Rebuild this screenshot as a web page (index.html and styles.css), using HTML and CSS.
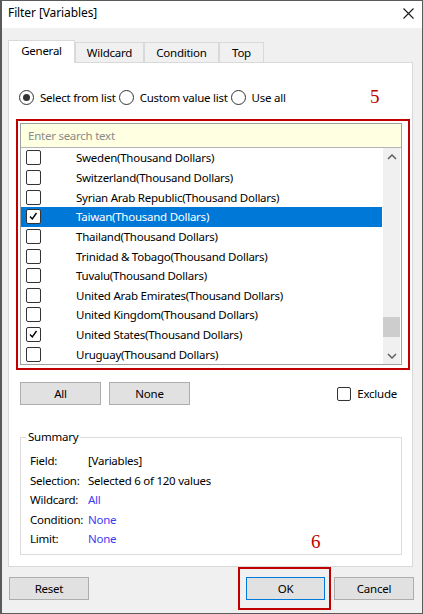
FILE: index.html
```html
<!DOCTYPE html>
<html>
<head>
<meta charset="utf-8">
<link rel="stylesheet" href="styles.css">
</head>
<body>
<div class="window">
  <div class="titlebar">
    <span class="title">Filter [Variables]</span>
    <svg class="close" width="11" height="11" viewBox="0 0 11 11"><path d="M0.5 0.5 L10.5 10.5 M10.5 0.5 L0.5 10.5" stroke="#1a1a1a" stroke-width="1.1" fill="none"/></svg>
  </div>
  <div class="content">
    <div class="tabs">
      <div class="tab active t-gen">General</div>
      <div class="tab t-wild">Wildcard</div>
      <div class="tab t-cond">Condition</div>
      <div class="tab t-top">Top</div>
    </div>
    <div class="panel">
      <div class="radios">
        <label class="radio"><span class="rb on"></span>Select from list</label>
        <label class="radio"><span class="rb"></span>Custom value list</label>
        <label class="radio"><span class="rb"></span>Use all</label>
      </div>
      <span class="anno anno5">5</span>
      <div class="redbox">
        <div class="listctl">
          <div class="search">Enter search text</div>
          <div class="listbody">
            <div class="rows">
              <div class="row"><span class="cb"></span><span>Sweden(Thousand Dollars)</span></div>
              <div class="row"><span class="cb"></span><span>Switzerland(Thousand Dollars)</span></div>
              <div class="row"><span class="cb"></span><span>Syrian Arab Republic(Thousand Dollars)</span></div>
              <div class="row sel"><span class="cb"><svg width="11" height="11" viewBox="0 0 11 11"><path d="M2 5.5 L4.3 8 L8.5 2" stroke="#000" stroke-width="1.4" fill="none"/></svg></span><span>Taiwan(Thousand Dollars)</span></div>
              <div class="row"><span class="cb"></span><span>Thailand(Thousand Dollars)</span></div>
              <div class="row"><span class="cb"></span><span>Trinidad &amp; Tobago(Thousand Dollars)</span></div>
              <div class="row"><span class="cb"></span><span>Tuvalu(Thousand Dollars)</span></div>
              <div class="row"><span class="cb"></span><span>United Arab Emirates(Thousand Dollars)</span></div>
              <div class="row"><span class="cb"></span><span>United Kingdom(Thousand Dollars)</span></div>
              <div class="row"><span class="cb"><svg width="11" height="11" viewBox="0 0 11 11"><path d="M2 5.5 L4.3 8 L8.5 2" stroke="#000" stroke-width="1.4" fill="none"/></svg></span><span>United States(Thousand Dollars)</span></div>
              <div class="row"><span class="cb"></span><span>Uruguay(Thousand Dollars)</span></div>
            </div>
            <div class="vscroll">
              <div class="sbtn"><svg width="10" height="6" viewBox="0 0 10 6"><path d="M1 5 L5 1 L9 5" stroke="#606060" stroke-width="1.5" fill="none"/></svg></div>
              <div class="track"><div class="thumb"></div></div>
              <div class="sbtn"><svg width="10" height="6" viewBox="0 0 10 6"><path d="M1 1 L5 5 L9 1" stroke="#606060" stroke-width="1.5" fill="none"/></svg></div>
            </div>
          </div>
        </div>
      </div>
      <div class="actions">
        <button class="btn">All</button>
        <button class="btn">None</button>
        <label class="exclude"><span class="cb small"></span>Exclude</label>
      </div>
      <fieldset class="summary">
        <legend>Summary</legend>
        <div class="srow"><span class="k">Field:</span><span>[Variables]</span></div>
        <div class="srow"><span class="k">Selection:</span><span>Selected 6 of 120 values</span></div>
        <div class="srow"><span class="k">Wildcard:</span><span class="blue">All</span></div>
        <div class="srow"><span class="k">Condition:</span><span class="blue">None</span></div>
        <div class="srow"><span class="k">Limit:</span><span class="blue">None</span></div>
      </fieldset>
      <span class="anno anno6">6</span>
    </div>
    <div class="footer">
      <button class="btn reset">Reset</button>
      <div class="okwrap"><button class="btn ok">OK</button></div>
      <button class="btn cancel">Cancel</button>
    </div>
  </div>
</div>
</body>
</html>
```
FILE: styles.css
```css
* { box-sizing: border-box; }
body {
  margin: 0;
  font-family: "Noto Sans", "Segoe UI", sans-serif;
  font-size: 11.5px;
  letter-spacing: -0.25px;
  color: #000;
  background: #fff;
}
.window {
  width: 423px;
  height: 614px;
  border: 1px solid #5a5a5a;
  border-left-width: 2px;
  background: #f0f0f0;
  display: flex;
  flex-direction: column;
}
.titlebar {
  flex: none;
  height: 27px;
  background: #fff;
  display: flex;
  align-items: center;
  justify-content: space-between;
  padding: 0 8px 3px 6px;
  line-height: 16px;
  font-size: 12px;
  letter-spacing: -0.1px;
}
.content {
  flex: 1;
  display: flex;
  flex-direction: column;
  padding: 0 8px 0 6px;
}
.tabs {
  display: flex;
  align-items: flex-end;
  height: 22px;
  margin-top: 12px;
}
.tab {
  height: 20px;
  border: 1px solid #d9d9d9;
  border-bottom: none;
  background: #f0f0f0;
  display: flex;
  align-items: center;
  justify-content: center;
  line-height: 16px;
}
.tab.active {
  height: 23px;
  margin-bottom: -1px;
  background: #fff;
  position: relative;
  z-index: 1;
  padding-bottom: 2px;
}
.t-gen { width: 67px; }
.t-wild { width: 69px; }
.t-cond { width: 75px; }
.t-top { width: 45px; }
.panel {
  width: 405px;
  height: 505px;
  background: #fff;
  border: 1px solid #d9d9d9;
  position: relative;
  display: flex;
  flex-direction: column;
  align-items: flex-start;
}
.radios {
  display: flex;
  align-items: center;
  height: 20px;
  margin: 24px 0 0 10px;
}
.radio {
  display: flex;
  align-items: center;
  margin-right: 3px;
}
.rb {
  width: 15px;
  height: 15px;
  border: 1px solid #333;
  border-radius: 50%;
  margin-right: 6px;
  display: flex;
  align-items: center;
  justify-content: center;
  background: #fff;
}
.rb.on::after {
  content: "";
  width: 7px;
  height: 7px;
  border-radius: 50%;
  background: #333;
}
.anno {
  position: absolute;
  font-family: "Liberation Serif", serif;
  font-size: 19px;
  line-height: 19px;
  letter-spacing: 0;
  color: #c00000;
}
.anno5 { left: 361px; top: 24px; }
.anno6 { left: 302px; top: 469px; }
.redbox {
  margin: 12px 0 0 7px;
  width: 394px;
  height: 251px;
  border: 2px solid #c00000;
  padding: 2px 6px 3px 2px;
}
.listctl {
  height: 100%;
  border: 1px solid #a0a0a0;
  display: flex;
  flex-direction: column;
  background: #fff;
}
.search {
  flex: none;
  height: 24px;
  background: #ffffe1;
  border-bottom: 1px solid #b4b4b4;
  padding-left: 7px;
  color: #8a8a8a;
  display: flex;
  align-items: center;
}
.listbody {
  flex: 1;
  min-height: 0;
  display: flex;
}
.rows {
  flex: 1;
  overflow: hidden;
}
.row {
  height: 19.65px;
  display: flex;
  align-items: center;
  padding-left: 5px;
  white-space: nowrap;
}
.row.sel {
  background: #0078d7;
  color: #fff;
}
.cb {
  flex: none;
  width: 15px;
  height: 15px;
  border: 1px solid #333;
  border-radius: 2px;
  background: #fff;
  margin-right: 35px;
  display: flex;
  align-items: center;
  justify-content: center;
}
.vscroll {
  flex: none;
  width: 17px;
  margin: 0 1px;
  background: #f0f0f0;
  display: flex;
  flex-direction: column;
}
.sbtn {
  height: 17px;
  display: flex;
  align-items: center;
  justify-content: center;
}
.track { flex: 1; }
.thumb {
  height: 20px;
  margin-top: 152px;
  background: #cdcdcd;
}
.actions {
  margin: 12px 0 0 11px;
  width: 382px;
  display: flex;
  align-items: center;
}
.btn {
  width: 81px;
  height: 23px;
  background: #e1e1e1;
  border: 1px solid #adadad;
  font: inherit;
  letter-spacing: inherit;
  color: #000;
  padding: 0;
  margin: 0;
}
.btn + .btn { margin-left: 8px; }
.exclude {
  margin-left: auto;
  margin-right: 5px;
  display: flex;
  align-items: center;
}
.cb.small {
  width: 14px;
  height: 14px;
  margin-right: 6px;
}
.summary {
  margin: 24px 0 0 11px;
  width: 382px;
  border: 1px solid #dcdcdc;
  padding: 6px 0 5px 0;
  min-width: 0;
}
.summary legend {
  padding: 0 2px;
  margin-left: 5px;
  line-height: 16px;
}
.srow {
  height: 19.5px;
  display: flex;
  align-items: center;
  padding-left: 9px;
}
.k { width: 58px; }
.blue { color: #3c3cf2; }
.footer {
  flex: none;
  height: 43px;
  display: flex;
  align-items: center;
}
.reset { width: 80px; margin-left: 1px; }
.okwrap {
  margin-left: auto;
  margin-right: 3px;
  border: 2px solid #c00000;
  padding: 8px 4px 8px 6px;
}
.ok {
  width: 79px;
  border-color: #0078d7;
}
.cancel { width: 80px; margin-left: 0; }
```
